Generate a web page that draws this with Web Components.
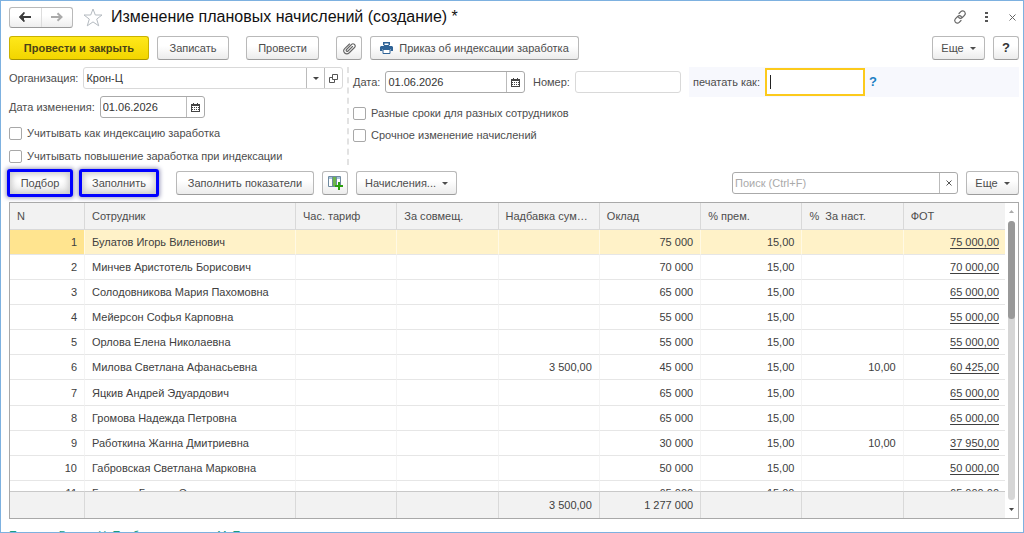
<!DOCTYPE html>
<html lang="ru">
<head>
<meta charset="utf-8">
<title>Изменение плановых начислений</title>
<style>
html, body { margin: 0; height: 100%; overflow: hidden; background: #fff; }
body { font: 11px/16px "Liberation Sans", Arial, sans-serif; color: #4d4d4d; }
</style>
</head>
<body>
<doc-window></doc-window>
<script>
const define = (name, html, extra) => customElements.define(name, class extends HTMLElement {
  constructor() {
    super();
    const t = document.createElement('template');
    t.innerHTML = '<style>*{box-sizing:border-box}:host{box-sizing:border-box}</style>' + html;
    this.attachShadow({ mode: 'open' }).append(t.content.cloneNode(true));
    if (extra) extra(this, this.shadowRoot);
  }
});

/* Push button: optional variant (primary, marked, icon) */
define('ui-button', `
<style>
:host { display: block; flex: none; }
button { display: flex; align-items: center; justify-content: center; gap: 6px; width: 100%; height: 24px; margin: 0; padding: 0 6px;
  font: inherit; color: #4d4d4d; white-space: nowrap; border: 1px solid #b9b9b9; border-bottom-color: #9c9c9c; border-radius: 3px;
  background: linear-gradient(#fff 40%, #ececec); }
:host([variant=primary]) button { font-weight: bold; color: #4a4217; background: linear-gradient(#ffe81a, #f2d500); border-color: #c9b200; border-bottom-color: #a89500; }
:host([variant=marked]) button { outline: 3px solid #00f; outline-offset: -1px; border-radius: 1px; box-shadow: 0 0 4px 3px #9999bb, inset 0 0 6px 2px #c8c8c8; }
:host([variant=icon]) button { padding: 0; }
.arrow { display: none; border: 3px solid transparent; border-top-color: #4d4d4d; border-bottom: 0; }
:host([menu]) .arrow { display: block; }
::slotted(svg) { flex: none; }
::slotted(b) { font-size: 13px; color: #333; }
</style>
<button type="button"><slot></slot><span class="arrow"></span></button>`,
(el, root) => { if (el.title) root.querySelector('button').setAttribute('aria-label', el.title); });

/* Check box with its caption */
define('ui-check', `
<style>
:host { display: block; }
label { display: flex; align-items: center; gap: 5px; height: 22px; }
input { appearance: none; width: 13px; height: 13px; margin: 0; border: 1px solid #a8a8a8; border-radius: 2px; background: #fff; flex: none; }
</style>
<label><input type="checkbox"><slot></slot></label>`);

/* Captioned text box with optional trailing button(s) */
class UiField extends HTMLElement {
  constructor() {
    super();
    this.attachShadow({ mode: 'open' });
  }
  connectedCallback() {
    const tails = {
      date: '<button type="button" aria-label="Календарь"><svg width="9" height="9" viewBox="0 0 9 9"><path fill="#444" d="M0 1h2V0h1v1h3V0h1v1h2v8H0z"/><path fill="#fff" d="M1 3h7v5H1z"/><path stroke="#444" fill="none" stroke-dasharray="1 1" d="M1 4.500h7M1 6.500h7"/></svg></button>',
      ref: '<button type="button" aria-label="Список"><svg width="6" height="3"><path fill="#444" d="M0 0h6L3 3z"/></svg></button><button type="button" aria-label="Открыть"><svg width="9" height="9" fill="none" stroke="#555"><path d="M3.500.500h5v5h-5zM3.500 3.500h-3v5h5v-3"/></svg></button>',
      search: '<button type="button" aria-label="Очистить"><svg width="6" height="6" stroke="#555"><path d="M.500.500l5 5M5.500.500l-5 5"/></svg></button>'
    };
    const cap = this.getAttribute('caption');
    this.shadowRoot.innerHTML = `
<style>
* { box-sizing: border-box; }
:host { display: flex; align-items: center; gap: 5px; }
label { white-space: nowrap; }
.box { display: flex; flex: 1; min-width: 0; height: 22px; border: 1px solid #aaa; border-radius: 3px; background: #fff; }
:host([soft]) .box { border-color: #d9d9d9; }
:host([active]) .box { height: 28px; border: 2px solid #fcca1c; border-radius: 0; }
input { flex: 1; width: 0; min-width: 0; height: 100%; border: 0; padding: 0 2px; margin: 0; font: inherit; color: #333; background: none; outline: 0; caret-color: #333; }
input::placeholder { color: #aaa; opacity: 1; }
button { width: 18px; height: 100%; padding: 0; border: 0; border-left: 1px solid #bbb; background: none; display: flex; align-items: center; justify-content: center; }
.caret { width: 1px; height: 14px; margin: 5px 0 0 3px; background: #222; }
</style>
${cap ? `<label for="i">${cap}</label>` : ''}
<div class="box">${this.hasAttribute('active') ? '<span class="caret"></span>' : ''}<input id="i" type="text">${tails[this.getAttribute('kind')] || ''}</div>`;
    const i = this.shadowRoot.querySelector('input');
    i.value = this.getAttribute('value') || '';
    i.placeholder = this.getAttribute('placeholder') || '';
    if (!cap) i.setAttribute('aria-label', 'Поиск');
  }
}
customElements.define('ui-field', UiField);

/* Window caption with navigation and tools */
define('title-bar', `
<style>
:host { display: flex; align-items: center; height: 22px; }
.nav { display: flex; width: 64px; height: 21px; border: 1px solid #b9b9b9; border-bottom-color: #999; border-radius: 3px; background: linear-gradient(#fff 40%, #eee); }
.nav button { flex: 1; padding: 0; border: 0; background: none; display: flex; align-items: center; justify-content: center; }
.nav button + button { border-left: 1px solid #ddd; }
.star { margin: 0 8px 0 10px; }
h1 { flex: 1; margin: 0; font-size: 16px; line-height: 22px; font-weight: normal; color: #111; }
.tool { width: 26px; height: 20px; padding: 0; border: 0; background: none; display: flex; align-items: center; justify-content: center; }
.close { margin-right: -6px; }
svg { display: block; }
.plain { padding: 0; border: 0; background: none; }
</style>
<div class="nav">
<button type="button" aria-label="Назад"><svg width="12" height="10" viewBox="0 0 12 10"><path fill="#3c3c3c" d="M12 4v2H5v4L0 5l5-5v1L3.500 4z"/><path fill="#3c3c3c" d="M5 0l1 1-3 4 3 4-1 1-5-5z"/></svg></button>
<button type="button" aria-label="Вперед"><svg width="12" height="10" viewBox="0 0 12 10" fill="none" stroke="#aaa" stroke-width="2"><path d="M0 5h10M6.500 1.200l4 3.800-4 3.800"/></svg></button>
</div>
<button type="button" class="plain star" aria-label="В избранное"><svg width="20" height="19" viewBox="0 0 20 19" fill="#fff" stroke="#b4bac0"><path d="M10 1l2.300 6h6.700l-5.300 4.100 2 6.700L10 13.900l-5.700 3.900 2-6.700L1 7h6.700z"/></svg></button>
<h1>Изменение плановых начислений (создание) *</h1>
<button type="button" class="tool" aria-label="Ссылка"><svg width="14" height="14" viewBox="0 0 14 14" fill="none" stroke="#666" stroke-width="1.200" stroke-linecap="round"><path d="M6 3.500l1.800-1.800a2.600 2.600 0 0 1 4 .300 2.600 2.600 0 0 1-.300 3.300L9.300 7.500a2.600 2.600 0 0 1-3.600 0M8 10.500l-1.800 1.800a2.600 2.600 0 0 1-4-.300 2.600 2.600 0 0 1 .300-3.300l2.200-2.200a2.600 2.600 0 0 1 3.600 0"/></svg></button>
<button type="button" class="tool" aria-label="Меню"><svg width="3" height="11" fill="#555"><path d="M0 0h3v2H0zM0 4h3v2H0zM0 8h3v2H0z"/></svg></button>
<button type="button" class="tool close" aria-label="Закрыть"><svg width="7" height="7" stroke="#666"><path d="M.500.500l6 6M6.500.500l-6 6"/></svg></button>`);

/* Employee table with sticky header and totals */
const rows = [
  ['Булатов Игорь Виленович', '', '75 000', '', '75 000,00'],
  ['Минчев Аристотель Борисович', '', '70 000', '', '70 000,00'],
  ['Солодовникова Мария Пахомовна', '', '65 000', '', '65 000,00'],
  ['Мейерсон Софья Карповна', '', '55 000', '', '55 000,00'],
  ['Орлова Елена Николаевна', '', '55 000', '', '55 000,00'],
  ['Милова Светлана Афанасьевна', '3 500,00', '45 000', '10,00', '60 425,00'],
  ['Яцкив Андрей Эдуардович', '', '65 000', '', '65 000,00'],
  ['Громова Надежда Петровна', '', '65 000', '', '65 000,00'],
  ['Работкина Жанна Дмитриевна', '', '30 000', '10,00', '37 950,00'],
  ['Габровская Светлана Марковна', '', '50 000', '', '50 000,00'],
  ['Больцер Герман Эдуардович', '', '65 000', '', '65 000,00']
];
define('pay-table', `
<style>
:host { display: flex; border: 1px solid #a9a9a9; background: #fff; overflow: hidden; }
.view { flex: 1; min-width: 0; overflow: hidden; }
table { width: 100%; table-layout: fixed; border-collapse: separate; border-spacing: 0; height: 330px; }
.n { width: 75px; } .name { width: 211px; }
th, td { padding: 0 7px; font-weight: normal; white-space: nowrap; overflow: hidden; text-overflow: ellipsis; text-align: right; border-right: 1px solid #f4f4f4; border-bottom: 1px solid #e6e6e6; color: #404040; }
thead tr, tfoot tr { height: 27px; }
th { position: sticky; top: 0; height: 27px; text-align: left; background: #f2f2f2; border-color: #d9d9d9; color: #4d4d4d; z-index: 1; }
tfoot td { position: sticky; bottom: 0; height: 27px; background: #f2f2f2; border-right-color: #d9d9d9; border-top: 1px solid #c9c9c9; border-bottom: 0; }
td:nth-child(2) { text-align: left; }
.sel td { background: #fff2c8; border-right-color: #fff9e4; }
.sel td:first-child { background: #ffe48f; }
tr > :last-child { border-right: 0; padding-right: 6px; }
a { color: inherit; text-decoration: underline; text-underline-offset: 2px; }
.bar { display: flex; flex-direction: column; align-items: center; width: 13px; padding: 7px 0; gap: 8px; }
.track { flex: 1; width: 7px; border-radius: 4px; background: #d6d6d6; }
.thumb { height: 35%; border-radius: 4px; background: #999; }
</style>
<div class="view"><table>
<colgroup><col class="n"><col class="name"><col><col><col><col><col><col><col></colgroup>
<thead><tr><th>N</th><th>Сотрудник</th><th>Час. тариф</th><th>За совмещ.</th><th>Надбавка сум…</th><th>Оклад</th><th>% прем.</th><th>%&nbsp; За наст.</th><th>ФОТ</th></tr></thead>
<tbody></tbody>
<tfoot><tr><td></td><td></td><td></td><td></td><td>3 500,00</td><td>1 277 000</td><td></td><td></td><td></td></tr></tfoot>
</table></div>
<div class="bar"><svg width="5" height="3"><path fill="#aaa" d="M0 3h5L2.500 0z"/></svg><div class="track"><div class="thumb"></div></div><svg width="5" height="3"><path fill="#444" d="M0 0h5L2.500 3z"/></svg></div>`,
(el, root) => {
  root.querySelector('tbody').innerHTML = rows.map(([name, add, pay, pct, sum], i) =>
    `<tr${i ? '' : ' class="sel"'}><td>${i + 1}</td><td>${name}</td><td></td><td></td><td>${add}</td><td>${pay}</td><td>15,00</td><td>${pct}</td><td><a href="#">${sum}</a></td></tr>`).join('');
});

/* The whole document form */
define('doc-window', `
<style>
:host { display: flex; flex-direction: column; height: 100vh; padding: 5px 4px 0 8px; border: 1px solid #7db1e0; overflow: hidden; }
.row { display: flex; align-items: center; }
.cmds { margin-top: 8px; }
.push { margin-left: auto; }
.form { display: flex; height: 104px; margin-top: 7px; }
.left { width: 340px; padding-right: 4px; border-right: 2px dashed #e2e2e2; height: 98px; flex: none; }
.left > * + * { margin-top: 7px; }
.left ui-check { margin: 4px 0 0; }
.left ui-check + ui-check { margin: 1px 0 0; }
.right { flex: 1; padding-left: 4px; }
.right .row { height: 30px; gap: 8px; margin-bottom: 5px; }
.hint { display: flex; align-items: center; flex: 1; height: 30px; padding-left: 4px; gap: 4px; background: #f7f8fd; }
.hint a { color: #1c7fc4; font-size: 13px; font-weight: bold; text-decoration: none; }
pay-table { flex: 1; min-height: 0; margin: 7px 0 0; }
footer { flex: none; height: 13px; padding-top: 8px; overflow: hidden; }
footer a { color: #1a9d80; text-decoration: none; }
svg { display: block; }
</style>
<title-bar></title-bar>
<div class="row cmds">
<ui-button variant="primary" style="width:140px">Провести и закрыть</ui-button>
<ui-button style="width:72px;margin-left:8px">Записать</ui-button>
<ui-button style="width:73px;margin-left:17px">Провести</ui-button>
<ui-button variant="icon" style="width:26px;margin-left:17px" title="Файлы"><svg width="13" height="13" viewBox="0 0 13 13" fill="none" stroke="#666" stroke-width="1.100" stroke-linecap="round"><path d="M9.500 4.500L5 9a1 1 0 0 1-1.500-1.500l5-5a2 2 0 0 1 3 3l-5.500 5.500a3 3 0 0 1-4.300-4.300L6.500 2"/></svg></ui-button>
<ui-button style="width:209px;margin-left:8px"><svg width="13" height="12" viewBox="0 0 13 12"><path fill="#2f6396" d="M3 0h7v3H3zM1 4h11l1 1v4h-2.500V7h-8v2H0V5z"/><path fill="#fff" stroke="#2f6396" d="M3 7.500h7v4H3zM4 1h5v2.500H4z"/></svg>Приказ об индексации заработка</ui-button>
<ui-button class="push" menu style="width:53px">Еще</ui-button>
<ui-button style="width:26px;margin-left:8px" variant="icon"><b>?</b></ui-button>
</div>
<div class="form">
<div class="left">
<ui-field caption="Организация:" value="Крон-Ц" kind="ref" soft></ui-field>
<ui-field caption="Дата изменения:" value="01.06.2026" kind="date" style="width:196px"></ui-field>
<ui-check>Учитывать как индексацию заработка</ui-check>
<ui-check>Учитывать повышение заработка при индексации</ui-check>
</div>
<div class="right">
<div class="row">
<ui-field caption="Дата:" value="01.06.2026" kind="date" style="width:172px"></ui-field>
<ui-field caption="Номер:" soft style="width:148px"></ui-field>
<div class="hint"><ui-field caption="печатать как:" active style="width:172px"></ui-field><a href="#">?</a></div>
</div>
<ui-check>Разные сроки для разных сотрудников</ui-check>
<ui-check>Срочное изменение начислений</ui-check>
</div>
</div>
<div class="row">
<ui-button variant="marked" style="width:62px">Подбор</ui-button>
<ui-button variant="marked" style="width:76px;margin-left:10px">Заполнить</ui-button>
<ui-button style="width:138px;margin-left:19px">Заполнить показатели</ui-button>
<ui-button variant="icon" style="width:26px;margin-left:8px" title="Показатели"><svg width="15" height="14" viewBox="0 0 15 14"><path fill="#fff" stroke="#6f8aa0" d="M.500.500h12v10H.500z"/><path fill="#a9c5dc" d="M1 1h11v2H1z"/><path fill="#6cb54a" d="M5 1h3v9H5z"/><path stroke="#6f8aa0" d="M4.500 1v9M8.500 1v9"/><path stroke="#2ba10e" stroke-width="2" d="M11 6v8M7 10h8"/></svg></ui-button>
<ui-button menu style="width:101px;margin-left:8px">Начисления...</ui-button>
<ui-field class="push" kind="search" placeholder="Поиск (Ctrl+F)" style="width:226px"></ui-field>
<ui-button menu style="width:53px;margin-left:8px">Еще</ui-button>
</div>
<pay-table></pay-table>
<footer><a href="#">Подпись: Группы Н. Пробная ведомость М. П.</a></footer>`);
</script>
</body>
</html>
